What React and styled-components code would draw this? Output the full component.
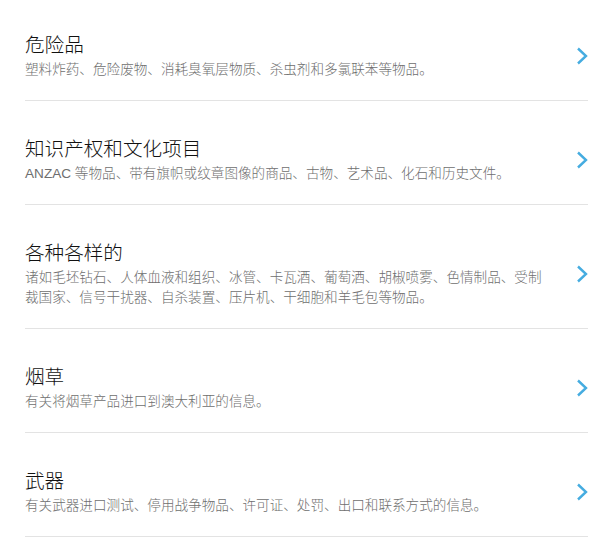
import React from 'react'
import styled, { createGlobalStyle } from 'styled-components'

const GlobalStyle = createGlobalStyle`
    body {
        margin: 0;
        background: #ffffff;
        font-family: "Liberation Sans", "Noto Sans CJK SC", sans-serif;
    }
`

const List = styled.ul`
    list-style: none;
    margin: 0;
    padding: 0 28px 0 25px;
`

const Item = styled.li`
    display: flex;
    align-items: center;
    gap: 24px;
    padding: ${props => (props.first ? '32px' : '35px')} 0 20px;
    border-bottom: 1px solid #e3e3e3;
    cursor: pointer;
`

const Text = styled.div`
    flex: 1;
    min-width: 0;
`

const Title = styled.h3`
    margin: 0 0 2px;
    font-size: 19.6px;
    line-height: 26px;
    font-weight: 300;
    color: #111111;
`

const Desc = styled.p`
    margin: 0;
    font-size: 13.6px;
    line-height: 20px;
    font-weight: 300;
    color: #6e6e6e;
`

const Chevron = styled.svg`
    flex: none;
    width: 12px;
    height: 18px;
`

const items = [
    {
        title: '危险品',
        desc: '塑料炸药、危险废物、消耗臭氧层物质、杀虫剂和多氯联苯等物品。',
    },
    {
        title: '知识产权和文化项目',
        desc: 'ANZAC 等物品、带有旗帜或纹章图像的商品、古物、艺术品、化石和历史文件。',
    },
    {
        title: '各种各样的',
        desc: '诸如毛坯钻石、人体血液和组织、冰管、卡瓦酒、葡萄酒、胡椒喷雾、色情制品、受制裁国家、信号干扰器、自杀装置、压片机、干细胞和羊毛包等物品。',
    },
    {
        title: '烟草',
        desc: '有关将烟草产品进口到澳大利亚的信息。',
    },
    {
        title: '武器',
        desc: '有关武器进口测试、停用战争物品、许可证、处罚、出口和联系方式的信息。',
    },
]

const App = () => {
    return (
        <React.Fragment>
            <GlobalStyle />
            <List>
                {items.map((item, i) => (
                    <Item key={item.title} first={i === 0}>
                        <Text>
                            <Title>{item.title}</Title>
                            <Desc>{item.desc}</Desc>
                        </Text>
                        <Chevron viewBox="0 0 12 18">
                            <path d="M2 1.5 L10 9 L2 16.5" fill="none" stroke="#45ace0" strokeWidth="2.4" />
                        </Chevron>
                    </Item>
                ))}
            </List>
        </React.Fragment>
    )
}

export default App
